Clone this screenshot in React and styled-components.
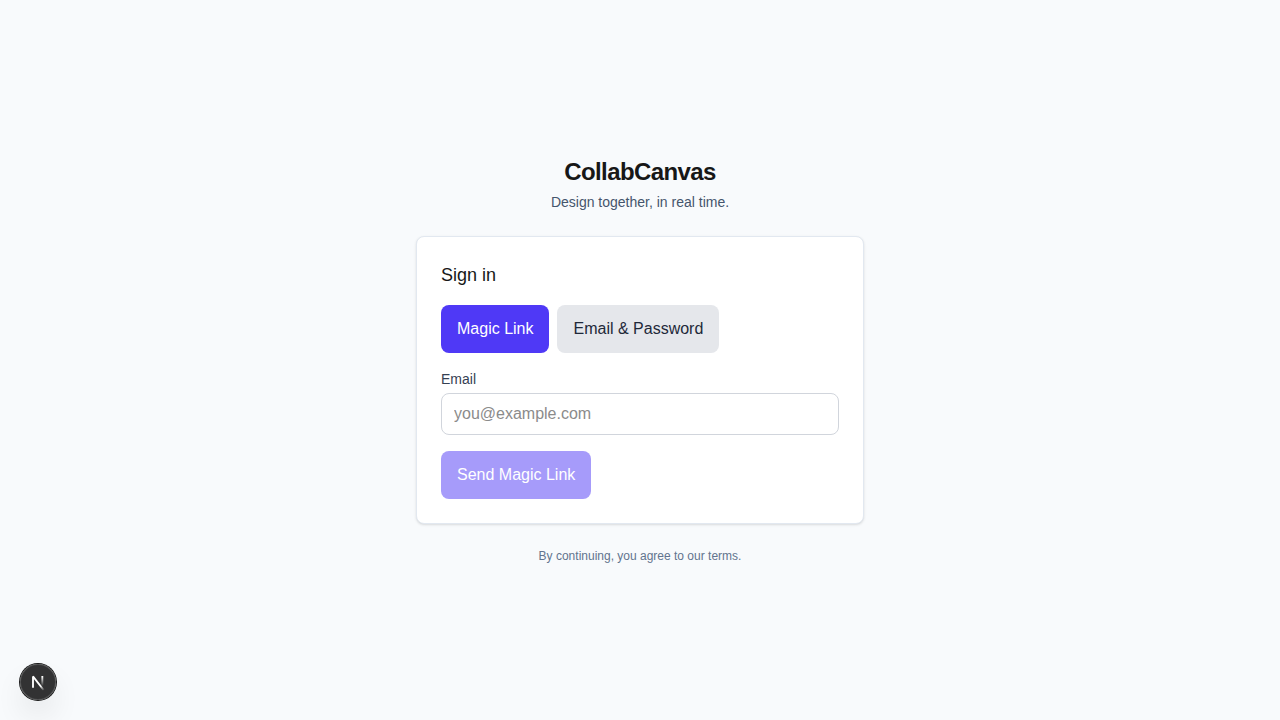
import React, { useState } from "react";
import styled, { createGlobalStyle } from "styled-components";

const GlobalStyle = createGlobalStyle`
  *, *::before, *::after { box-sizing: border-box; }
  body {
    margin: 0;
    background: #f8fafc;
    color: #171717;
    font-family: "Liberation Sans", Arial, Helvetica, sans-serif;
    font-size: 16px;
    line-height: 24px;
  }
  button, input { font: inherit; }
`;

const Page = styled.main`
  min-height: 100vh;
  display: flex;
  align-items: center;
  justify-content: center;
  padding: 24px;
  background: #f8fafc;
`;

const Column = styled.div`
  width: 100%;
  max-width: 448px;
`;

const Header = styled.header`
  margin-bottom: 24px;
  text-align: center;
`;

const Brand = styled.h1`
  margin: 0;
  font-size: 24px;
  line-height: 32px;
  font-weight: 600;
  letter-spacing: -0.025em;
`;

const Tagline = styled.p`
  margin: 4px 0 0;
  font-size: 14px;
  line-height: 20px;
  color: #45556c;
`;

const Card = styled.section`
  padding: 24px;
  background: #fff;
  border: 1px solid #e2e8f0;
  border-radius: 8px;
  box-shadow: 0 1px 3px rgba(0, 0, 0, 0.1), 0 1px 2px -1px rgba(0, 0, 0, 0.1);
`;

const CardTitle = styled.h2`
  margin: 0 0 16px;
  font-size: 18px;
  line-height: 28px;
  font-weight: 500;
`;

const Tabs = styled.div`
  display: flex;
  gap: 8px;
  margin-bottom: 16px;
`;

const Button = styled.button`
  padding: 12px 16px;
  border: 0;
  border-radius: 8px;
  cursor: pointer;
  color: ${(p) => (p.$primary ? "#fff" : "#1e2939")};
  background: ${(p) => (p.$primary ? "#4f39f6" : "#e5e7eb")};

  &:disabled {
    opacity: 0.5;
    cursor: default;
  }
`;

const Form = styled.form`
  display: flex;
  flex-direction: column;
  align-items: flex-start;
  gap: 16px;
`;

const Field = styled.div`
  width: 100%;
`;

const Label = styled.label`
  display: block;
  margin-bottom: 4px;
  font-size: 14px;
  line-height: 20px;
  color: #364153;
`;

const Input = styled.input`
  display: block;
  width: 100%;
  padding: 8px 12px;
  border: 1px solid #d1d5dc;
  border-radius: 8px;
  background: #fff;
  color: #171717;

  &::placeholder {
    color: #8b8b8b;
    opacity: 1;
  }
`;

const Terms = styled.p`
  margin: 24px 0 0;
  font-size: 12px;
  line-height: 16px;
  text-align: center;
  color: #62748e;
`;

const DevBadge = styled.button`
  position: fixed;
  left: 20px;
  bottom: 20px;
  width: 36px;
  height: 36px;
  padding: 0;
  display: flex;
  align-items: center;
  justify-content: center;
  border: 0;
  border-radius: 50%;
  background: rgba(0, 0, 0, 0.8);
  cursor: pointer;
  box-shadow: 0 0 0 1px #171717, inset 0 0 0 1px rgba(255, 255, 255, 0.14),
    0 16px 32px -8px rgba(0, 0, 0, 0.24);
`;

const Mark = styled.svg`
  flex: none;
`;

function NextMark() {
  return (
    <Mark width="40" height="40" viewBox="0 0 40 40" fill="none" aria-hidden="true">
      <g transform="translate(12.5 13)">
        <path d="M13.3 15.2 L2.5 1.4 V12.8" stroke="url(#diagonalFade)" strokeWidth="1.86" strokeLinejoin="bevel" />
        <path d="M11.825 1 V13.1" stroke="url(#stemFade)" strokeWidth="1.86" />
      </g>
      <defs>
        <linearGradient id="diagonalFade" x1="9.955" y1="11.13" x2="15.66" y2="18.27" gradientUnits="userSpaceOnUse">
          <stop stopColor="white" />
          <stop offset="0.604" stopColor="white" stopOpacity="0" />
          <stop offset="1" stopColor="white" stopOpacity="0" />
        </linearGradient>
        <linearGradient id="stemFade" x1="11.82" y1="1.4" x2="11.79" y2="11" gradientUnits="userSpaceOnUse">
          <stop stopColor="white" />
          <stop offset="1" stopColor="white" stopOpacity="0" />
        </linearGradient>
      </defs>
    </Mark>
  );
}

export default function App() {
  const [email, setEmail] = useState("");
  const [mode, setMode] = useState("magic");

  return (
    <>
      <GlobalStyle />
      <Page>
        <Column>
          <Header>
            <Brand>CollabCanvas</Brand>
            <Tagline>Design together, in real time.</Tagline>
          </Header>
          <Card>
            <CardTitle>Sign in</CardTitle>
            <Tabs>
              <Button type="button" $primary={mode === "magic"} onClick={() => setMode("magic")}>
                Magic Link
              </Button>
              <Button type="button" $primary={mode === "password"} onClick={() => setMode("password")}>
                Email &amp; Password
              </Button>
            </Tabs>
            <Form onSubmit={(e) => e.preventDefault()}>
              <Field>
                <Label htmlFor="email">Email</Label>
                <Input
                  id="email"
                  type="email"
                  placeholder="you@example.com"
                  value={email}
                  onChange={(e) => setEmail(e.target.value)}
                />
              </Field>
              <Button type="submit" $primary disabled={!email}>
                Send Magic Link
              </Button>
            </Form>
          </Card>
          <Terms>By continuing, you agree to our terms.</Terms>
        </Column>
      </Page>
      <DevBadge type="button" aria-label="Open developer tools">
        <NextMark />
      </DevBadge>
    </>
  );
}
